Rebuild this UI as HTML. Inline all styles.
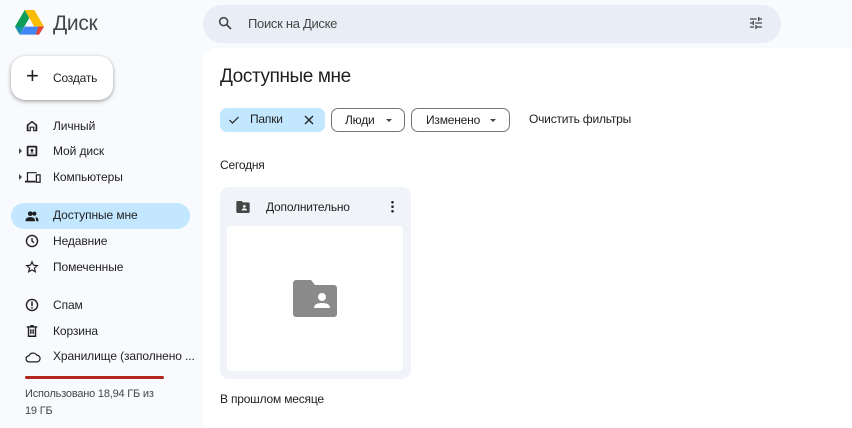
<!DOCTYPE html>
<html><head><meta charset="utf-8"><style>
*{box-sizing:border-box;margin:0;padding:0}
body{width:852px;height:420px;overflow:hidden;background:#f8fafd;font-family:"Liberation Sans",sans-serif;color:#1f1f1f;position:relative}
.a{position:absolute}
.nav{position:absolute;left:53px;font-size:12px;color:#1f1f1f;letter-spacing:-0.1px}
.ic{position:absolute;left:25px}
.chip{position:absolute;top:108px;height:24px;border:1px solid #747775;border-radius:7px;font-size:12px;line-height:22px;letter-spacing:-0.2px}
</style></head><body>
<svg class="a" style="left:15px;top:10px" width="29" height="26" viewBox="0 0 87 78">
<path d="M29 0h29l29 50H58z" fill="#fbbc04"/>
<path d="M29 0L0 50l14 24 29-50z" fill="#0f9d58"/>
<path d="M14 74h58l15-24H29z" fill="#4285f4"/>
<path d="M72 74l15-24H70l-8 24z" fill="#ea4335"/>
<path d="M0 50l14 24 12-24z" fill="#1e88e5" opacity=".6"/>
</svg>
<div class="a" style="left:53px;top:12px;font-size:21px;color:#444746;letter-spacing:-0.3px">Диск</div>
<div class="a" style="left:203px;top:5px;width:578px;height:38px;background:#e9eef6;border-radius:19px"></div>
<svg class="a" style="left:217px;top:15px" width="16" height="16" viewBox="0 0 24 24"><circle cx="10" cy="10" r="6" fill="none" stroke="#444746" stroke-width="2.4"/><path d="M14.5 14.5L21 21" stroke="#444746" stroke-width="2.6"/></svg>
<div class="a" style="left:248px;top:16px;font-size:13px;color:#444746;letter-spacing:-0.3px">Поиск на Диске</div>
<svg class="a" style="left:748px;top:15px" width="16" height="16" viewBox="0 0 24 24" fill="#444746"><path d="M3 17v2h6v-2zM3 5v2h10V5zm10 16v-2h8v-2h-8v-2h-2v6zM7 9v2H3v2h4v2h2V9zm14 4v-2H11v2zm-6-4h2V7h4V5h-4V3h-2z"/></svg>
<div class="a" style="left:11px;top:56px;width:102px;height:44px;background:#fff;border-radius:14px;box-shadow:0 1px 3px rgba(0,0,0,.3),0 2px 6px rgba(0,0,0,.12)"></div>
<div class="a" style="left:26px;top:65px;font-size:22px;font-weight:300;color:#1f1f1f;line-height:22px">+</div>
<div class="a" style="left:53px;top:71px;font-size:12px;letter-spacing:-0.2px">Создать</div>
<svg class="ic" style="top:119px" width="14" height="14" viewBox="0 0 24 24" fill="#1f1f1f"><path d="M12 3L3 10v11h7v-6h4v6h7V10z"/><path d="M12 6l-6 5v8h2v-6h8v6h2v-8z" fill="#fff"/></svg>
<div class="nav" style="top:119px">Личный</div>
<div class="a" style="left:19px;top:148px;border-left:3px solid #444;border-top:3px solid transparent;border-bottom:3px solid transparent"></div>
<svg class="ic" style="top:144px" width="14" height="14" viewBox="0 0 24 24"><rect x="3" y="3" width="18" height="18" rx="2" fill="#1f1f1f"/><rect x="6" y="6" width="12" height="12" fill="#fff"/><circle cx="12" cy="11" r="2.5" fill="#1f1f1f"/><path d="M8 16c1-2 7-2 8 0z" fill="#1f1f1f"/></svg>
<div class="nav" style="top:144px">Мой диск</div>
<div class="a" style="left:19px;top:174px;border-left:3px solid #444;border-top:3px solid transparent;border-bottom:3px solid transparent"></div>
<svg class="ic" style="top:170px" width="16" height="14" viewBox="0 0 26 22"><path d="M3 3h16v2H5v12H3zM0 17h17v3H0z" fill="#1f1f1f"/><rect x="18.5" y="7.5" width="6" height="12" fill="none" stroke="#1f1f1f" stroke-width="2"/></svg>
<div class="nav" style="top:170px">Компьютеры</div>
<div class="a" style="left:11px;top:203px;width:179px;height:26px;background:#c2e7ff;border-radius:13px"></div>
<svg class="ic" style="top:209px" width="14" height="14" viewBox="0 0 24 24" fill="#1f1f1f"><circle cx="9" cy="8" r="4"/><path d="M1 19c0-4 5-5 8-5s8 1 8 5v2H1z"/><circle cx="16" cy="8" r="3.5"/><path d="M18 14c3 .5 5 2 5 5v2h-4v-2c0-2-1-4-1-5z"/></svg>
<div class="nav" style="top:208px">Доступные мне</div>
<svg class="ic" style="top:234px" width="14" height="14" viewBox="0 0 24 24" fill="none" stroke="#1f1f1f" stroke-width="2.4"><circle cx="12" cy="12" r="9.5"/><path d="M12 7v5l3.5 3"/></svg>
<div class="nav" style="top:234px">Недавние</div>
<svg class="ic" style="top:260px" width="14" height="14" viewBox="0 0 24 24" fill="none" stroke="#1f1f1f" stroke-width="2"><path d="M12 3l2.7 6 6.3.6-4.8 4.2 1.5 6.4L12 17l-5.7 3.2 1.5-6.4L3 9.6 9.3 9z"/></svg>
<div class="nav" style="top:260px">Помеченные</div>
<svg class="ic" style="top:298px" width="14" height="14" viewBox="0 0 24 24"><circle cx="12" cy="12" r="9.5" fill="none" stroke="#1f1f1f" stroke-width="2.4"/><path d="M12 6v8" stroke="#1f1f1f" stroke-width="2.6"/><circle cx="12" cy="17" r="1.5" fill="#1f1f1f"/></svg>
<div class="nav" style="top:298px">Спам</div>
<svg class="ic" style="top:324px" width="14" height="14" viewBox="0 0 24 24" fill="none" stroke="#1f1f1f" stroke-width="2.4"><path d="M3 5h18M9 3h6M6 5v16h12V5M10 9v8M14 9v8"/></svg>
<div class="nav" style="top:324px">Корзина</div>
<svg class="ic" style="top:350px" width="16" height="14" viewBox="0 0 26 20" fill="none" stroke="#1f1f1f" stroke-width="2"><path d="M7 18a5 5 0 0 1-.5-10A7 7 0 0 1 19 7a5.5 5.5 0 0 1 0 11z"/></svg>
<div class="nav" style="top:349px">Хранилище (заполнено ...</div>
<div class="a" style="left:25px;top:376px;width:139px;height:3px;background:#b3261e;border-radius:2px"></div>
<div class="a" style="left:25px;top:386px;font-size:11px;color:#444746;line-height:17px;width:150px;letter-spacing:-0.2px">Использовано 18,94 ГБ из<br>19 ГБ</div>
<div class="a" style="left:203px;top:48px;width:660px;height:380px;background:#fff;border-radius:14px 0 0 0"></div>
<div class="a" style="left:220px;top:66px;font-size:19px;color:#1f1f1f;letter-spacing:-0.4px">Доступные мне</div>
<div class="chip" style="left:220px;width:105px;background:#c2e7ff;border-color:#c2e7ff"></div>
<svg class="a" style="left:228px;top:114px" width="12" height="12" viewBox="0 0 24 24" fill="none" stroke="#1f1f1f" stroke-width="2.4"><path d="M3 12l6 6L21 6"/></svg>
<div class="a" style="left:250px;top:112px;font-size:12px;letter-spacing:-0.2px">Папки</div>
<svg class="a" style="left:303px;top:114px" width="12" height="12" viewBox="0 0 24 24" stroke="#1f1f1f" stroke-width="2.6"><path d="M4 4l16 16M20 4L4 20"/></svg>
<div class="chip" style="left:331px;width:74px;padding-left:13px">Люди</div>
<div class="a" style="left:386px;top:119px;border-top:3px solid #444;border-left:3px solid transparent;border-right:3px solid transparent"></div>
<div class="chip" style="left:411px;width:99px;padding-left:14px">Изменено</div>
<div class="a" style="left:490px;top:119px;border-top:3px solid #444;border-left:3px solid transparent;border-right:3px solid transparent"></div>
<div class="a" style="left:529px;top:112px;font-size:12px;letter-spacing:-0.2px">Очистить фильтры</div>
<div class="a" style="left:220px;top:158px;font-size:12px;letter-spacing:-0.2px">Сегодня</div>
<div class="a" style="left:220px;top:187px;width:191px;height:192px;background:#f0f4f9;border-radius:9px"></div>
<svg class="a" style="left:235px;top:199px" width="16" height="16" viewBox="0 0 24 24"><path d="M2 5a2 2 0 0 1 2-2h6l2 2h8a2 2 0 0 1 2 2v12a2 2 0 0 1-2 2H4a2 2 0 0 1-2-2z" fill="#444746"/><circle cx="14" cy="11" r="2" fill="#fff"/><path d="M10 17c0-2 2-3 4-3s4 1 4 3z" fill="#fff"/></svg>
<div class="a" style="left:266px;top:200px;font-size:12px;letter-spacing:-0.2px">Дополнительно</div>
<div class="a" style="left:391px;top:200px;width:3px;height:13px;background:radial-gradient(circle,#1f1f1f 1.2px,transparent 1.4px) 0 0/3px 4.5px"></div>
<div class="a" style="left:227px;top:226px;width:176px;height:145px;background:#fff;border-radius:4px"></div>
<svg class="a" style="left:293px;top:280px" width="44" height="37" viewBox="0 0 44 37"><path d="M0 3a3 3 0 0 1 3-3h15l4 5h19a3 3 0 0 1 3 3v26a3 3 0 0 1-3 3H3a3 3 0 0 1-3-3z" fill="#8a8a8a"/><circle cx="29" cy="17" r="4" fill="#fff"/><path d="M21 28c0-4 4-5 8-5s8 1 8 5z" fill="#fff"/></svg>
<div class="a" style="left:220px;top:392px;font-size:12px;letter-spacing:-0.2px">В прошлом месяце</div>
</body></html>
